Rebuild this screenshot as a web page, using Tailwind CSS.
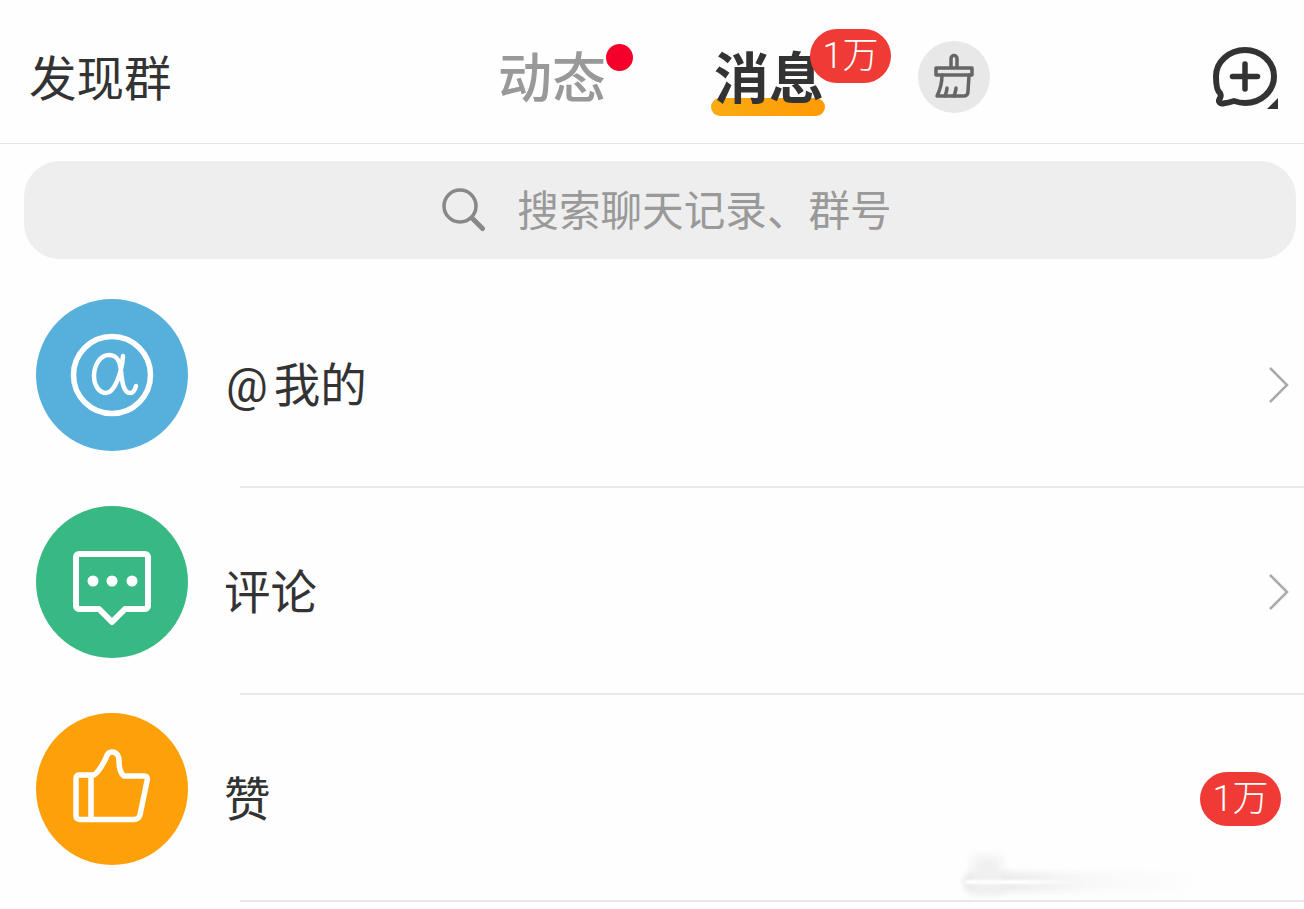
<!DOCTYPE html>
<html lang="zh-CN">
<head>
    <meta charset="UTF-8">
    <title>消息</title>
    <script src="https://cdn.jsdelivr.net/npm/@tailwindcss/browser@4"></script>
</head>
<body class="bg-[#fefefe] font-['Roboto','Noto_Sans_CJK_SC',sans-serif] text-[#333]">
<div class="w-[1304px] h-[909px] overflow-hidden relative">
    <!-- 顶栏 -->
    <header class="h-[144px] border-b border-[#e5e5e5] flex items-center relative">
        <div class="w-[498px] pl-[29px] text-[47.500px] leading-none text-[#333] mt-[18px]">发现群</div>
        <div class="w-[216px] mt-[16px]">
            <span class="relative inline-block text-[54px] leading-none font-medium text-[#999]">动态
                <span class="absolute left-[108px] top-[-9px] w-[27px] h-[27px] rounded-full bg-[#f5002b]"></span>
            </span>
        </div>
        <div class="w-[204px] mt-[16px]">
            <span class="relative inline-block text-[55px] leading-none font-bold text-[#333]">
                <span class="absolute left-[-3px] top-[46px] w-[114px] h-[18px] rounded-full bg-gradient-to-r from-[#fbab10] to-[#ff9a05]"></span>
                <span class="relative">消息</span>
                <span class="absolute left-[96px] top-[-23px] w-[81px] h-[54px] rounded-full bg-[#ef3a36] text-white text-[36px] font-light flex items-center justify-center">1万</span>
            </span>
        </div>
        <div class="w-[72px] h-[72px] rounded-full bg-[#e8e8e8] flex items-center justify-center mt-[10px]">
            <svg width="44" height="50" viewBox="0 0 44 50" fill="none" stroke="#666" stroke-width="3.500" stroke-linejoin="round" stroke-linecap="round">
                <path d="M19 15V6.500a3 3 0 0 1 6 0V15"/>
                <path d="M4 16h36v7H4z"/>
                <path d="M10 23c0 9-2 15-5 21h27c3 0 4-2 4-5l1-16"/>
                <path d="M13 44c1-3 2-5 2-8M22 44c1-3 2-5 2-8"/>
            </svg>
        </div>
        <div class="absolute left-[1210px] top-[46px] w-[72px] h-[66px]">
            <svg width="72" height="66" viewBox="0 0 72 66" fill="none">
                <path d="M35 4c16 0 29 12 29 26.500S51 57 35 57c-4 0-8-1-11-2-3 1-7 2-11 2.500-3 .5-5-2-3.500-4.500 1.500-2 1.500-4 .5-6C7 45 6 38 6 30.500 6 16 19 4 35 4z" stroke="#333" stroke-width="6" stroke-linejoin="round"/>
                <path d="M35 18v25M22.500 30.500h25" stroke="#333" stroke-width="5.500" stroke-linecap="round"/>
                <path d="M57 63l11-11v11z" fill="#333"/>
            </svg>
        </div>
    </header>

    <!-- 搜索 -->
    <div class="mt-[17px] ml-[24px] w-[1272px] h-[98px] rounded-[36px] bg-[#eeeeee] flex items-center justify-center gap-[31px] pl-[20px] text-[41.600px] text-[#999]">
        <svg width="44" height="44" viewBox="0 0 44 44" fill="none" stroke="#888" stroke-width="3.500" stroke-linecap="round" class="ml-[-6px]">
            <circle cx="18" cy="18" r="16"/>
            <path d="M30.500 30.500l10 10" stroke-width="5"/>
        </svg>
        <span class="leading-none mt-[3px]">搜索聊天记录、群号</span>
    </div>

    <!-- 列表 -->
    <ul class="mt-[22px]">
        <li class="h-[207px] relative flex items-center pl-[36px] pb-[2px] after:absolute after:left-[240px] after:right-0 after:bottom-0 after:h-[2px] after:bg-[#e8e8e8]">
            <div class="w-[152px] h-[152px] rounded-full bg-[#57b0db] flex items-center justify-center -mt-[18px]">
                <svg width="84" height="84" viewBox="0 0 84 84" fill="none" stroke="#fff" stroke-linecap="round" stroke-linejoin="round">
                    <circle cx="42" cy="42" r="38.500" stroke-width="5.500"/>
                    <path d="M53 23C52 38 45 60 36 60 29 60 24 52 24 43 24 31 31 22 39 22 47 22 50 28 51 38 52 50 54 60 60 60 63 60 65 57 66 53" stroke-width="4.500"/>
                </svg>
            </div>
            <div class="ml-[36px] text-[46.500px] leading-none mt-[6px]"><span class="ml-[2px] mr-[6px]">@</span>我的</div>
            <svg class="absolute left-[1267px] top-[85px]" width="24" height="38" viewBox="0 0 24 38" fill="none" stroke="#aaa" stroke-width="2.500"><path d="M3 2l17 17L3 36"/></svg>
        </li>
        <li class="h-[207px] relative flex items-center pl-[36px] pb-[2px] after:absolute after:left-[240px] after:right-0 after:bottom-0 after:h-[2px] after:bg-[#e8e8e8]">
            <div class="w-[152px] h-[152px] rounded-full bg-[#38b883] flex items-center justify-center -mt-[18px]">
                <svg width="78" height="74" viewBox="0 0 78 74" fill="none" class="mt-[13px]">
                    <path d="M6 3h66a3 3 0 0 1 3 3v49a3 3 0 0 1-3 3H52L39 71 26 58H6a3 3 0 0 1-3-3V6a3 3 0 0 1 3-3z" stroke="#fff" stroke-width="6" stroke-linejoin="round"/>
                    <circle cx="20" cy="30" r="5.500" fill="#fff"/><circle cx="39" cy="30" r="5.500" fill="#fff"/><circle cx="59" cy="30" r="5.500" fill="#fff"/>
                </svg>
            </div>
            <div class="ml-[36px] text-[46.500px] leading-none mt-[6px]">评论</div>
            <svg class="absolute left-[1267px] top-[85px]" width="24" height="38" viewBox="0 0 24 38" fill="none" stroke="#aaa" stroke-width="2.500"><path d="M3 2l17 17L3 36"/></svg>
        </li>
        <li class="h-[207px] relative flex items-center pl-[36px] pb-[2px] after:absolute after:left-[240px] after:right-0 after:bottom-0 after:h-[2px] after:bg-[#e8e8e8]">
            <div class="w-[152px] h-[152px] rounded-full bg-[#fda00a] flex items-center justify-center -mt-[18px]">
                <svg width="78" height="74" viewBox="0 0 78 74" fill="none" stroke="#fff" stroke-width="5.500" stroke-linejoin="round" class="-mt-[5px]">
                    <path d="M6 26H21C26 23 30 15 33 9 34 5 36 3 39 3 44 3 46 7 46 12 46 19 47 24 51 27H71C74 27 75 29 74 32L67 66C66 69 64 70.500 61 70.500H7C4.500 70.500 3 69 3 67V30C3 27 4 26 6 26z"/>
                    <path d="M18 27V70"/>
                </svg>
            </div>
            <div class="ml-[36px] text-[46.500px] leading-none mt-[6px]">赞</div>
            <span class="absolute left-[1200px] top-[77px] w-[81px] h-[54px] rounded-full bg-[#ef3a36] text-white text-[36px] font-light flex items-center justify-center">1万</span>
        </li>
    </ul>

    <!-- 水印残影 -->
    <div class="absolute left-[964px] top-[872px] w-[240px] h-[20px] rounded-full bg-gradient-to-r from-[#e4e4e4] via-[#f8f8f8] to-transparent blur-[3px]"></div>
    <div class="absolute left-[972px] top-[856px] w-[30px] h-[38px] bg-[#f0f0f0] blur-[5px]"></div>
    <div class="absolute left-[965px] top-[880px] w-[120px] h-[4px] rounded-full bg-gradient-to-r from-white via-white to-transparent blur-[1px]"></div>
</div>
</body>
</html>
